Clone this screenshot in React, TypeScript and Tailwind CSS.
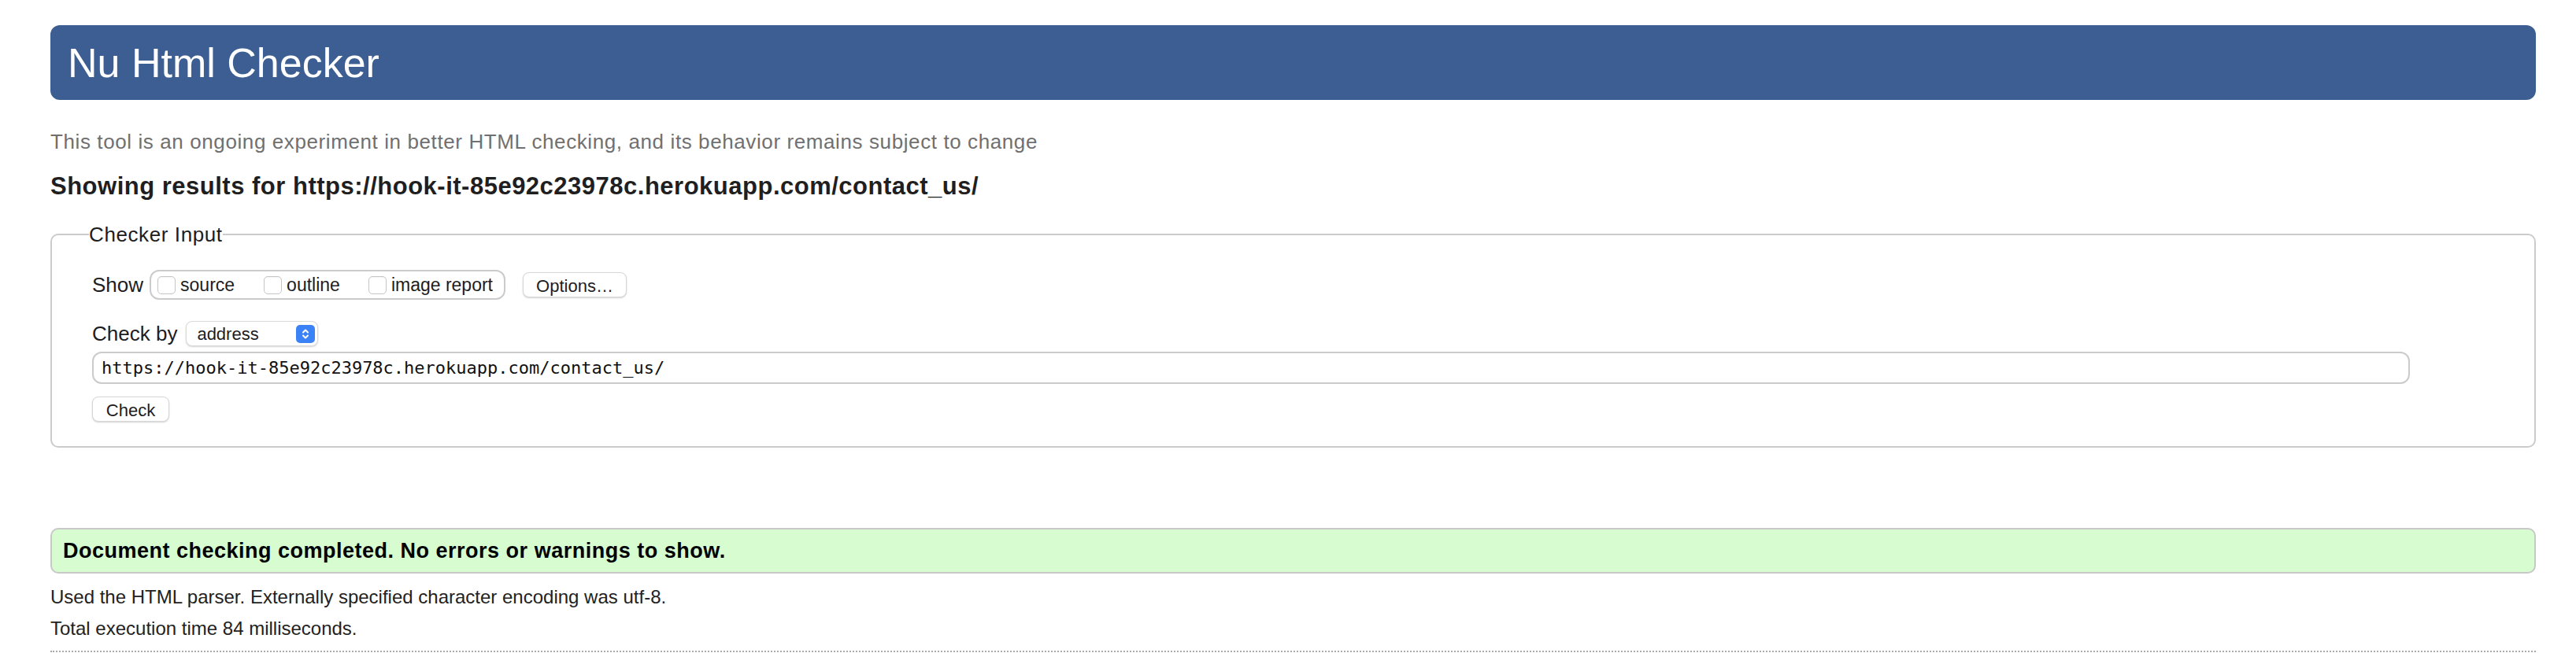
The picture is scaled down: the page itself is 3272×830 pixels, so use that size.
import React from 'react';

const Checkbox: React.FC = () => (
  <span className="inline-block w-[23px] h-[23px] rounded-[5px] border border-[#c6c6c6] bg-white shadow-[inset_0_1px_1px_rgba(0,0,0,0.05)]" />
);

const Stepper: React.FC = () => (
  <span className="flex items-center justify-center w-[24px] h-[23px] rounded-[5px] bg-[#3b82f6]">
    <svg width="12" height="17" viewBox="0 0 12 17" fill="none" stroke="white" strokeWidth="2" strokeLinecap="round" strokeLinejoin="round">
      <path d="M3 6.5 L6 3.5 L9 6.5" />
      <path d="M3 10.5 L6 13.5 L9 10.5" />
    </svg>
  </span>
);

const App: React.FC = () => {
  const url = 'https://hook-it-85e92c23978c.herokuapp.com/contact_us/';

  return (
    <div className="min-h-screen bg-white pl-[64px] pr-[51px] pt-[32px] font-['Liberation_Sans',Arial,sans-serif] text-[#222]">
      <header className="h-[95px] rounded-[12px] bg-[#3d5e92] flex items-center pl-[22px]">
        <h1 className="text-[52px] leading-[60px] text-white font-normal">Nu Html Checker</h1>
      </header>

      <p className="mt-[38px] text-[26px] leading-[30px] tracking-[0.6px] text-[#707070]">
        This tool is an ongoing experiment in better HTML checking, and its behavior remains subject to change
      </p>

      <h2 className="mt-[25px] text-[31px] leading-[34px] tracking-[0.5px] font-bold text-[#1f1f22]">
        Showing results for {url}
      </h2>

      <fieldset className="mt-[29px] border-2 border-[#cbcbcb] rounded-[10px] pl-[51px] pb-[31px]">
        <legend className="-ml-[4px] text-[26px] leading-[30px] tracking-[0.6px] text-[#1d1d1f]">Checker Input</legend>

        <div className="mt-[30px] flex items-center h-[38px]">
          <span className="text-[26px] text-[#1d1d1f]">Show</span>
          <div className="ml-[8px] h-[38px] flex items-center rounded-[12px] border-2 border-[#cbcbcb] pl-[8px] pr-[14px] text-[23px] text-[#1d1d1f]">
            <label className="flex items-center gap-[6px]">
              <Checkbox />
              source
            </label>
            <label className="ml-[37px] flex items-center gap-[6px]">
              <Checkbox />
              outline
            </label>
            <label className="ml-[36px] flex items-center gap-[6px]">
              <Checkbox />
              image report
            </label>
          </div>
          <button className="ml-[22px] w-[132px] h-[32px] rounded-[8px] border border-[#d6d6d6] bg-white shadow-[0_1px_2px_rgba(0,0,0,0.18)] text-[22px] text-[#1d1d1f]">
            Options…
          </button>
        </div>

        <div className="mt-[27px] flex items-center h-[32px]">
          <span className="text-[26px] text-[#1d1d1f]">Check by</span>
          <div className="ml-[11px] w-[168px] h-[32px] flex items-center justify-between rounded-[8px] border border-[#dadada] bg-white shadow-[0_1px_2px_rgba(0,0,0,0.18)] pl-[13px] pr-[3px]">
            <span className="text-[22px] text-[#1d1d1f]">address</span>
            <Stepper />
          </div>
        </div>

        <div className="mt-[7px] w-[2944px] h-[41px] flex items-center rounded-[12px] border-2 border-[#cbcbcb] pl-[10px] font-['DejaVu_Sans_Mono',monospace] text-[22px] text-[#111]">
          {url}
        </div>

        <button className="mt-[16px] w-[98px] h-[32px] rounded-[8px] border border-[#d6d6d6] bg-white shadow-[0_1px_2px_rgba(0,0,0,0.18)] text-[22px] text-[#1d1d1f]">
          Check
        </button>
      </fieldset>

      <div className="mt-[102px] h-[58px] flex items-center rounded-[10px] border-2 border-[#c8c8c8] bg-[#d6fcd0] pl-[14px]">
        <p className="text-[27px] tracking-[0.5px] font-bold text-black">Document checking completed. No errors or warnings to show.</p>
      </div>

      <p className="mt-[16px] text-[24px] leading-[28px]">Used the HTML parser. Externally specified character encoding was utf-8.</p>
      <p className="mt-[12px] text-[24px] leading-[28px]">Total execution time 84 milliseconds.</p>
      <div className="mt-[14px] border-t-2 border-dotted border-[#a8a8a8]" />
    </div>
  );
};

export default App;
